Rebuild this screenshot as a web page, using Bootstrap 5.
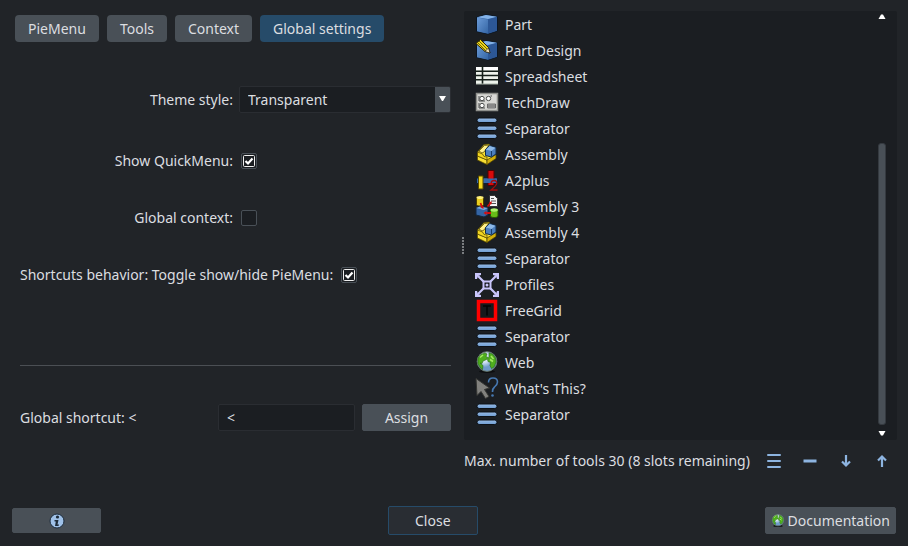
<!DOCTYPE html>
<html lang="en">
<head>
<meta charset="utf-8">
<meta name="viewport" content="width=device-width, initial-scale=1">
<title>PieMenu settings</title>
<link href="https://cdn.jsdelivr.net/npm/bootstrap@5.3.0/dist/css/bootstrap.min.css" rel="stylesheet">
<style>
body{background:#212428;color:#dcdee0;font-family:"Noto Sans",sans-serif;font-size:14px;line-height:20px}
.dialog{min-height:100vh;padding:11px 11px 11px 12px}
.panes{display:grid;grid-template-columns:minmax(0,452fr) minmax(0,433fr)}
.btn{--bs-btn-font-size:14px;--bs-btn-line-height:20px;--bs-btn-color:#dcdee0;--bs-btn-bg:#495057;--bs-btn-border-color:#495057;--bs-btn-hover-color:#fff;--bs-btn-hover-bg:#565e66;--bs-btn-padding-y:0;--bs-btn-border-radius:2px;height:27px}
.tabs{gap:8px;padding:4px 3px 0}
.tabs .btn{--bs-btn-border-radius:4px;--bs-btn-padding-x:13px;border:0}
.tabs .btn.active{background:#264b69;color:#dcdee0}
.settings{padding:0 13px 0 8px}
.form-line{display:grid;grid-template-columns:213fr 212fr;column-gap:6px;align-items:center;height:27px}
.theme-line{margin-top:44px}
.check-line{margin-top:30px}
.theme-line + .check-line{margin-top:34px}
.picker{height:27px}
.picker .form-select{height:27px;padding:0 20px 0 8px;font-size:14px;line-height:20px;color:#dcdee0;border:1px solid #2a2d32;border-radius:2px;background:#1b1e22 linear-gradient(#495057,#495057) right/15px 100% no-repeat}
.picker svg{position:absolute;right:5px;top:10px;pointer-events:none}
.form-check-input{width:16px;height:16px;margin:0 0 0 2px;background-color:#1b1e22;border:1px solid #495057;border-radius:2px!important;flex-shrink:0}
.form-check-input:checked{background-color:#1b1e22;border-color:#495057;background-size:14px 14px;background-image:url("data:image/svg+xml,%3Csvg xmlns='http://www.w3.org/2000/svg' viewBox='0 0 14 14'%3E%3Crect x='1.5' y='1.5' width='11' height='11' rx='1' fill='none' stroke='%23eee'/%3E%3Cpath d='M3.5 7 6 9.5 10.500 4.500' fill='none' stroke='%23fff' stroke-width='2.200'/%3E%3C/svg%3E")}
.rule{height:1px;margin:77px 0 38px;background:#4b4f54;opacity:1;border:0}
.shortcut{display:grid;grid-template-columns:191fr 137fr 89fr;column-gap:7px;align-items:center}
.shortcut .form-control{height:27px;padding:0 8px;font-size:14px;line-height:20px;color:#dcdee0;background:#1b1e22;border:1px solid #2a2d32;border-radius:2px}
.grip{position:absolute;left:-2px;top:226px;width:2px;height:17px;background:repeating-linear-gradient(#7a7d80 0 2px,transparent 2px 3px)}
.tool-box{background:#1b1e22;border-radius:2px;min-height:429px}
.list-group{--bs-list-group-bg:transparent;--bs-list-group-color:#dcdee0;padding-top:1px}
.list-group-item{height:26px;padding:0 0 0 11px;gap:6px;border:0}
.scroller{width:8px;margin-right:11px;padding:3px 0 4px}
.gap-above{flex:125}
.thumb{flex:281;background:#495057;border-radius:3px;border:1px solid #353a40}
.gap-below{flex:6}
.count{height:42px;gap:6px}
.icon-btn{--bs-btn-bg:transparent;--bs-btn-border-color:transparent;--bs-btn-padding-x:0;width:30px}
.footer-bar{margin-top:24px}
.info-btn{width:89px;height:25px}
.close-btn{--bs-btn-bg:#292d33;--bs-btn-border-color:#264b69;width:90px;height:29px}
.doc-btn{--bs-btn-padding-x:5px;gap:3px;margin-right:1px}
</style>
<script src="https://cdn.jsdelivr.net/npm/bootstrap@5.3.0/dist/js/bootstrap.bundle.min.js"></script>
</head>
<body>
<svg width="0" height="0" class="position-absolute" aria-hidden="true">
<defs>
<linearGradient id="blueFace" x2="1" y2="1"><stop stop-color="#6b9bd8"/><stop offset="1" stop-color="#3465a4"/></linearGradient>
<linearGradient id="barFill" x2="0" y2="1"><stop stop-color="#98bce6"/><stop offset="1" stop-color="#6d9bd0"/></linearGradient>
<radialGradient id="sea" cx=".35" cy=".3"><stop stop-color="#fff"/><stop offset=".5" stop-color="#cfe1f2"/><stop offset="1" stop-color="#6f9bca"/></radialGradient>
<symbol id="cube" viewBox="0 0 24 24"><path d="M1.500 4 11 1.500 22.500 3.500v14.500L13 21 1.500 18.500z" fill="#3465a4" stroke="#0b1521"/><path d="M2 4.300 11 2 22 3.800 13 6z" fill="#83b2e8"/><path d="M2 4.500 13 6.500v14.200L2 18.200z" fill="url(#blueFace)"/><path d="M13 6.500l9-2.500v13.800L13 20.700z" fill="#2c5796"/></symbol>
<symbol id="design" viewBox="0 0 24 24"><use href="#cube"/><path d="M1 4.500 5.500 0.500 13.500 8.500l1.500 5.500-5-1.500z" fill="#ecd51c" stroke="#2b2400"/><path d="M4 2 12.500 10.500M2.500 3.500 11 12" stroke="#514700" stroke-width=".8"/><path d="m10 12.500 3.500-3.500L15 14z" fill="#f6e4bd" stroke="#222" stroke-width=".7"/></symbol>
<symbol id="sheet" viewBox="0 0 24 24"><path d="M1 2h22v17H1z" fill="#eef3ec"/><path d="M1 2h22v3H1z" fill="#fff"/><path d="M0 6.200h24M0 10.500h24M0 14.800h24M7.500 1v18" stroke="#15201a" stroke-width="1.600"/><path d="M1 19h22" stroke="#a9b3a8"/></symbol>
<symbol id="draw" viewBox="0 0 24 24"><g transform="translate(0 -1)"><path d="M1.500 3.500h21v17h-21z" fill="#d8d8d5" stroke="#8e908c" stroke-width="1.500"/><g fill="#fff" stroke="#4b4d4c"><circle cx="7" cy="8.500" r="2.200"/><circle cx="13.500" cy="8.500" r="2.200"/><circle cx="7" cy="15.500" r="2.200"/><path d="M4 6v5h6M4 13v5h6M15.500 6h1.500" fill="none"/></g><path d="M12.500 14h8v4h-8zm0 2h8" fill="#aaa" stroke="#555" stroke-width=".8"/></g></symbol>
<symbol id="bars" viewBox="0 0 24 24"><g fill="url(#barFill)" stroke="#0c1117"><rect x="2" y="1" width="20" height="4.500" rx="2.200"/><rect x="2" y="9" width="20" height="4.500" rx="2.200"/><rect x="2" y="17" width="20" height="4.500" rx="2.200"/></g></symbol>
<symbol id="assembly" viewBox="0 0 24 24"><g stroke="#493d00" stroke-width=".7" stroke-linejoin="round"><path d="M2.500 9 9 1.500 14 1l2 2v8l5 1v3l-9 6.500-9.500-4.500z" fill="#f5dc32"/><path d="m2.500 13 9.500 4v4.500l-9.500-4.500z" fill="#f8e034"/><path d="m12 17 9-5.500v4l-9 6z" fill="#d2af0a"/><path d="m2.500 9 5 2 1.500 2.500 3 .5v3l-9.500-4z" fill="#f3d620"/><path d="m4 8 5.500-5.500L14 2l-5 7-2 1z" fill="#fff08a"/></g><path d="m10.500 6.500 4-4 6.500 2v6.500l-4.500 3-6-1.500z" fill="#4c7fbe" stroke="#102c4b"/><path d="m11 6.500 3.700-3.500 5.800 1.700L16.500 8z" fill="#8db9e8"/><path d="M16.500 8v5.500" stroke="#183c69"/></symbol>
<symbol id="aplus" viewBox="0 0 24 24"><path d="M1.500 9h20.500v5.500H1.500z" fill="#3869aa" stroke="#0c2036"/><path d="M13 1.500h6v15h-6z" fill="#d70b0b" stroke="#500"/><path d="M9 9.500h13v4.500H9z" fill="#3869aa"/><path d="M3.500 7h4.500v13H3.500z" fill="#f6dc20" stroke="#5b4d00"/><path d="M16 14q.5-2.500 3-2.500 3 0 2.700 3-.2 2-5.700 6.500h6.500" fill="none" stroke="#a40d0d" stroke-width="1.300"/></symbol>
<symbol id="asm3" viewBox="0 0 24 24"><path d="M1.500 3v6.500c0 2 7 2 7 0V3z" fill="#e8ce20" stroke="#4b3e00"/><ellipse cx="5" cy="2.500" rx="3.500" ry="1.500" fill="#fff17a"/><path d="M14.500.5h5l3 3v8h-8z" fill="#f4f4f4" stroke="#333"/><path d="M16 3.500h3M16 6h5m-5 2.500h5" stroke="#555"/><path d="m1 13 4-1.500 8 1.500v7l-4 2-8-2z" fill="#3465a4" stroke="#10253e"/><path d="m1 13 4-1.500 8 1.500-4 2z" fill="#78a8dd"/><path d="M15.500 15v6c0 2 7.500 2 7.500 0v-6z" fill="#67bd18" stroke="#235600"/><ellipse cx="19.200" cy="15" rx="3.700" ry="1.700" fill="#adf36b"/><path d="m5.500 8 1.500 4m5.500-.5 3-3.500m-4 10h4.500" stroke="#d50c0c" stroke-width="1.800"/><path d="m5 12 3.500-1v3zm9-5 3-.5-1 3.500zm-2.500 9v4l-3-2z" fill="#d50c0c"/></symbol>
<symbol id="profiles" viewBox="0 0 24 24"><path d="m3 3 5.500 5.500m7 7L21 21m0-18-5.500 5.500m-7 7L3 21" stroke="#c9c5fb" stroke-width="2.200"/><rect x="8.500" y="8.500" width="7" height="7" fill="#15171b" stroke="#c9c5fb" stroke-width="2"/><circle cx="12" cy="12" r="1.500" fill="#c9c5fb"/><path d="M0 6V0h6v2L3 3 2 6zm18-6h6v6h-2l-1-3-3-1zM0 18h2l1 3 3 1v2H0zm22 0h2v6h-6v-2l3-1z" fill="#c9c5fb"/></symbol>
<symbol id="freegrid" viewBox="0 0 24 24"><path d="M3.500 2.500h17v18h-17z" fill="#17191c" stroke="#f00" stroke-width="3.500"/><path d="M8 7h8M12 7v9.500" stroke="#050505" stroke-width="1.500"/></symbol>
<symbol id="globe" viewBox="0 0 24 24"><ellipse cx="12" cy="20.500" rx="8" ry="1.500" fill="#0d0e10"/><circle cx="12" cy="10.500" r="9.800" fill="url(#sea)" stroke="#6d7f72"/><path d="M3 7 6 3.500 10 2l2 1-1 2.500 2 1-1.500 2L8 10l-1 2.500-2-.5 3 2.500-.5 4L5.500 17 3 12.500zM14 2l3.500 1 3 4 .5 4-2 5-2.500 1.500L15 14.500l.5-3-2.500-1L12.500 8 14 6z" fill="#4fae1e" stroke="#256a0d" stroke-width=".6"/><path d="m5 6.500 3-2.500M16 5l2.500 3M15 8.500l3 2" stroke="#a4ea61" stroke-width="1.600"/></symbol>
<symbol id="what" viewBox="0 0 24 24"><path d="M1 1.500 14.500 11l-5 1.500 4.500 7-3.500 2-4.500-7-4 4z" fill="#81817e" stroke="#353633"/><path d="M13.500 5.500q0-4.500 4.500-4.500 4.500 0 4.500 4 0 2.500-3 5-2 1.500-2 5" fill="none" stroke="#4779b2" stroke-width="1.600"/><circle cx="17.500" cy="18.500" r="1.300" fill="#4779b2"/></symbol>
</defs>
</svg>
<main class="dialog d-flex flex-column">
<div class="panes flex-grow-1">
<section aria-label="Global settings">
<nav class="tabs d-flex" aria-label="Sections">
<button type="button" class="btn">PieMenu</button>
<button type="button" class="btn">Tools</button>
<button type="button" class="btn">Context</button>
<button type="button" class="btn active" aria-current="true">Global settings</button>
</nav>
<form class="settings">
<div class="form-line theme-line"><label class="text-end" for="theme">Theme style:</label>
<div class="picker position-relative"><select id="theme" class="form-select"><option>Transparent</option></select><svg width="7" height="5" viewBox="0 0 7 5" aria-hidden="true"><path d="M0 0h7L4 5H3z" fill="#fff"/></svg></div></div>
<div class="form-line check-line"><label class="text-end" for="quick">Show QuickMenu:</label><input id="quick" class="form-check-input" type="checkbox" checked></div>
<div class="form-line check-line"><label class="text-end" for="context">Global context:</label><input id="context" class="form-check-input" type="checkbox"></div>
<div class="form-line check-line d-flex"><label for="toggle">Shortcuts behavior: Toggle show/hide PieMenu:</label><input id="toggle" class="form-check-input" type="checkbox" checked></div>
<hr class="rule">
<div class="shortcut"><label for="shortcut">Global shortcut: &lt;</label><input id="shortcut" type="text" class="form-control" value="&lt;"><button type="button" class="btn">Assign</button></div>
</form>
</section>
<section class="position-relative d-flex flex-column" aria-label="Tools list">
<span class="grip"></span>
<div class="tool-box d-flex flex-grow-1">
<ul class="list-group list-group-flush flex-grow-1">
<li class="list-group-item d-flex align-items-center"><svg width="24" height="24"><use href="#cube"/></svg>Part</li>
<li class="list-group-item d-flex align-items-center"><svg width="24" height="24"><use href="#design"/></svg>Part Design</li>
<li class="list-group-item d-flex align-items-center"><svg width="24" height="24"><use href="#sheet"/></svg>Spreadsheet</li>
<li class="list-group-item d-flex align-items-center"><svg width="24" height="24"><use href="#draw"/></svg>TechDraw</li>
<li class="list-group-item d-flex align-items-center"><svg width="24" height="24"><use href="#bars"/></svg>Separator</li>
<li class="list-group-item d-flex align-items-center"><svg width="24" height="24"><use href="#assembly"/></svg>Assembly</li>
<li class="list-group-item d-flex align-items-center"><svg width="24" height="24"><use href="#aplus"/></svg>A2plus</li>
<li class="list-group-item d-flex align-items-center"><svg width="24" height="24"><use href="#asm3"/></svg>Assembly 3</li>
<li class="list-group-item d-flex align-items-center"><svg width="24" height="24"><use href="#assembly"/></svg>Assembly 4</li>
<li class="list-group-item d-flex align-items-center"><svg width="24" height="24"><use href="#bars"/></svg>Separator</li>
<li class="list-group-item d-flex align-items-center"><svg width="24" height="24"><use href="#profiles"/></svg>Profiles</li>
<li class="list-group-item d-flex align-items-center"><svg width="24" height="24"><use href="#freegrid"/></svg>FreeGrid</li>
<li class="list-group-item d-flex align-items-center"><svg width="24" height="24"><use href="#bars"/></svg>Separator</li>
<li class="list-group-item d-flex align-items-center"><svg width="24" height="24"><use href="#globe"/></svg>Web</li>
<li class="list-group-item d-flex align-items-center"><svg width="24" height="24"><use href="#what"/></svg>What's This?</li>
<li class="list-group-item d-flex align-items-center"><svg width="24" height="24"><use href="#bars"/></svg>Separator</li>
</ul>
<div class="scroller d-flex flex-column align-items-stretch" aria-hidden="true">
<svg width="8" height="5" viewBox="0 0 8 5"><path d="M.5 5h7L5 0.500H3z" fill="#fff"/></svg>
<span class="gap-above"></span><span class="thumb"></span><span class="gap-below"></span>
<svg width="8" height="5" viewBox="0 0 8 5"><path d="M.5 0h7L5 4.500H3z" fill="#fff"/></svg>
</div>
</div>
<div class="count d-flex align-items-center"><span class="me-auto text-nowrap">Max. number of tools 30 (8 slots remaining)</span>
<button type="button" class="btn icon-btn d-flex align-items-center justify-content-center" aria-label="Add separator"><svg width="14" height="16" viewBox="0 0 14 16"><path d="M1 2h12M1 8h12M1 14h12" stroke="#8db4e0" stroke-width="2" stroke-linecap="round"/></svg></button>
<button type="button" class="btn icon-btn d-flex align-items-center justify-content-center" aria-label="Remove"><svg width="14" height="14" viewBox="0 0 14 14"><path d="M.5 7h13" stroke="#8db4e0" stroke-width="3"/></svg></button>
<button type="button" class="btn icon-btn d-flex align-items-center justify-content-center" aria-label="Move down"><svg width="12" height="14" viewBox="0 0 12 14"><path d="M6 1v10M2 7.500l4 4 4-4" fill="none" stroke="#8db4e0" stroke-width="2.200"/></svg></button>
<button type="button" class="btn icon-btn d-flex align-items-center justify-content-center" aria-label="Move up"><svg width="12" height="14" viewBox="0 0 12 14"><path d="M6 13V3M2 6.500l4-4 4 4" fill="none" stroke="#8db4e0" stroke-width="2.200"/></svg></button>
</div>
</section>
</div>
<footer class="footer-bar d-flex align-items-center justify-content-between">
<button type="button" class="btn info-btn d-flex align-items-center justify-content-center" aria-label="Information"><svg width="16" height="16" viewBox="0 0 16 16"><circle cx="8" cy="8" r="7" fill="#9fc1e8" stroke="#1c2c3d"/><circle cx="8.500" cy="4" r="1.600" fill="#1d2b39"/><path d="M5.500 7h4l-1 4.500h1.500l-.5 1.500H6l.8-4.500H5.500z" fill="#1d2b39"/></svg></button>
<button type="button" class="btn close-btn">Close</button>
<button type="button" class="btn doc-btn d-flex align-items-center"><svg width="14" height="14"><use href="#globe"/></svg>Documentation</button>
</footer>
</main>
</body>
</html>
